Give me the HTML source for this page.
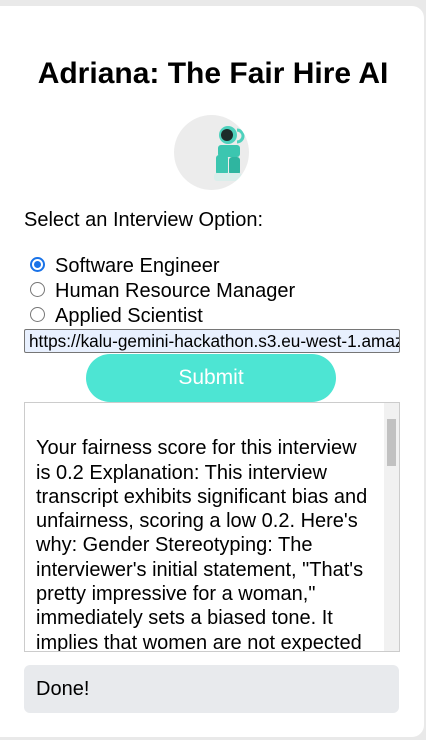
<!DOCTYPE html>
<html><head><style>
*{box-sizing:border-box;margin:0;padding:0}
body{width:426px;height:740px;background:#e9e9e9;font-family:"Liberation Sans",Arial,sans-serif;position:relative;overflow:hidden;color:#000}
.card{position:absolute;left:-12px;top:6px;width:436px;height:731px;background:#fff;border-radius:12px}
.a{position:absolute}
h1{position:absolute;left:0;width:426px;top:57px;text-align:center;font-size:30px;font-weight:bold}
.circ{left:174px;top:115px;width:75px;height:75px;border-radius:50%;background:#ececec;overflow:hidden}
.lbl{font-size:20px}
.radio{width:15px;height:15px;border-radius:50%;border:1px solid #767676;background:#fff}
.radio.on{border:2px solid #1a73e8}
.radio.on::after{content:"";position:absolute;left:2px;top:2px;width:7px;height:7px;border-radius:50%;background:#1a73e8}
.inp{left:24px;top:329px;width:376px;height:24px;background:#e8f0fe;border:1px solid #767676;border-radius:2px;font-size:17.2px;padding:2px 4px;white-space:nowrap;overflow:hidden;line-height:18px}
.btn{left:86px;top:354px;width:250px;height:48px;border-radius:24px;background:#4de5d3;color:#fff;font-size:21px;text-align:center;line-height:48px}
.ta{left:24px;top:402px;width:376px;height:250px;border:1px solid #ccc;overflow:hidden}
.ta .t{position:absolute;left:11px;top:9px;width:338px;font-size:20px;line-height:24.3px}
.sb{position:absolute;right:0;top:0;width:15px;height:248px;background:#f1f1f1}
.th{position:absolute;left:3px;top:16px;width:9px;height:47px;background:#c1c1c1}
.done{left:24px;top:665px;width:375px;height:48px;background:#e8eaed;border-radius:6px;font-size:20px;line-height:48px;padding-left:12px}
</style></head><body>
<div class="card"></div>
<h1>Adriana: The Fair Hire AI</h1>
<div class="a circ">
<svg width="75" height="75" viewBox="0 0 75 75">
<circle cx="54" cy="20" r="9" fill="#4ed1bd"/>
<circle cx="53" cy="20" r="6" fill="#1d2a2a"/>
<path d="M63 15 a5 5 0 0 1 0 12" stroke="#4ed1bd" stroke-width="3" fill="none"/>
<rect x="44" y="30" width="22" height="12" rx="3" fill="#3cc6b0"/>
<rect x="42" y="40" width="12" height="20" rx="3" fill="#3cc6b0"/>
<rect x="55" y="42" width="11" height="18" rx="3" fill="#2fb5a0"/>
<rect x="40" y="58" width="28" height="8" rx="3" fill="#d9eeeb"/>
</svg></div>
<div class="a lbl" style="left:24px;top:209px">Select an Interview Option:</div>
<div class="a radio on" style="left:30px;top:257px"></div>
<div class="a lbl" style="left:55px;top:255px">Software Engineer</div>
<div class="a radio" style="left:30px;top:282px"></div>
<div class="a lbl" style="left:55px;top:280px">Human Resource Manager</div>
<div class="a radio" style="left:30px;top:307px"></div>
<div class="a lbl" style="left:55px;top:305px">Applied Scientist</div>
<div class="a inp">https://kalu-gemini-hackathon.s3.eu-west-1.amazonaws.com/</div>
<div class="a btn">Submit</div>
<div class="a ta"><div class="t"><br>Your fairness score for this interview is 0.2 Explanation: This interview transcript exhibits significant bias and unfairness, scoring a low 0.2. Here's why: Gender Stereotyping: The interviewer's initial statement, "That's pretty impressive for a woman," immediately sets a biased tone. It implies that women are not expected to succeed in tech, making the</div>
<div class="sb"><div class="th"></div></div></div>
<div class="a done">Done!</div>
</body></html>
